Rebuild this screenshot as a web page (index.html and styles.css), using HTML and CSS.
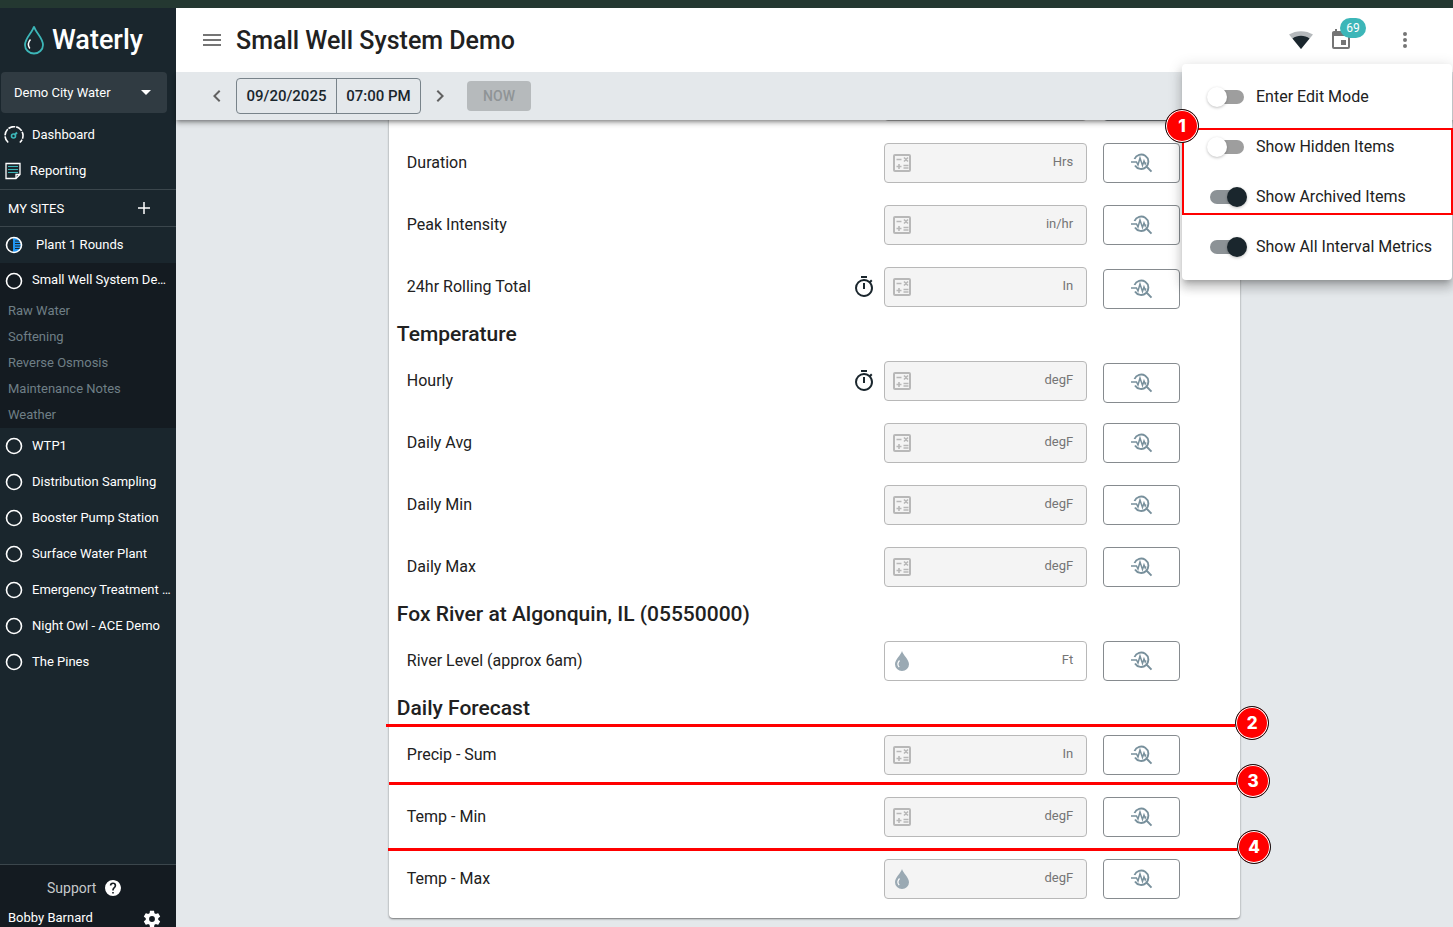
FILE: index.html
```html
<!DOCTYPE html>
<html lang="en">
<head>
    <meta charset="UTF-8">
    <meta name="viewport" content="width=device-width, initial-scale=1.0">
    <title>Waterly - Small Well System Demo</title>
    <link rel="stylesheet" href="styles.css">
</head>
<body>
    <svg class="sprite" aria-hidden="true">
        <symbol id="i-calc" viewBox="0 0 18 18">
            <rect x="1" y="1" width="16" height="16" rx="1" fill="none" stroke="currentColor" stroke-width="2"/>
            <path d="M3.500 5.500h5M3.500 12.500h5M6 10v5M10.500 11.500h5M10.500 14h5M11 3.500l4 4M15 3.500l-4 4" fill="none" stroke="currentColor" stroke-width="1.600"/>
        </symbol>
        <symbol id="i-drop" viewBox="0 0 14 20">
            <path d="M7 0C6 4 0 8.500 0 13.200A7 6.800 0 0 0 14 13.200C14 8.500 8 4 7 0Z" fill="currentColor"/>
            <path d="M4.500 9.500C2.600 11.600 2.500 14.200 4.200 16.200" fill="none" stroke="#fff" stroke-width="1.200"/>
        </symbol>
        <symbol id="i-chart" viewBox="0 0 22 20">
            <path d="M3.500 6A7.200 7.200 0 1 1 4 12.500M15.500 13.500L20.500 18.700" fill="none" stroke="currentColor" stroke-width="1.900"/>
            <path d="M0 9h5.500l1.500 3 2-7 2.500 7.500 1.500-4.500 1.200 3 .8-1.500" fill="none" stroke="currentColor" stroke-width="1.500"/>
        </symbol>
        <symbol id="i-timer" viewBox="0 0 24 24">
            <path fill="currentColor" d="M12,20A7,7 0 0,1 5,13A7,7 0 0,1 12,6A7,7 0 0,1 19,13A7,7 0 0,1 12,20M19.03,7.39L20.45,5.97C20,5.46 19.55,5 19.04,4.56L17.62,6C16.07,4.74 14.12,4 12,4A9,9 0 0,0 3,13A9,9 0 0,0 12,22C17,22 21,17.97 21,13C21,10.88 20.26,8.93 19.03,7.39M11,14H13V8H11M15,1H9V3H15V1Z"/>
        </symbol>
        <symbol id="i-ring" viewBox="0 0 18 18">
            <circle cx="9" cy="9" r="7.500" fill="none" stroke="#fff" stroke-width="1.600"/>
        </symbol>
    </svg>

    <div class="topline"></div>
    <div class="app">
        <nav class="sidebar">
            <a class="logo" href="#">
                <svg width="20" height="30" viewBox="0 0 20 30">
                    <path d="M10 1.500C8.500 7.500 1 13 1 20A9 8.500 0 0 0 19 20C19 13 11.500 7.500 10 1.500Z" fill="none" stroke="#3cb6b8" stroke-width="1.800"/>
                    <path d="M6.500 14.500C3.800 17.500 3.700 20.500 5.800 23.500" fill="none" stroke="#fff" stroke-width="1.500"/>
                </svg>
                <span>Waterly</span>
            </a>
            <div class="org">
                <select aria-label="Organization">
                    <option>Demo City Water</option>
                </select>
                <svg width="10" height="5" viewBox="0 0 10 5"><path d="M0 0h10L5 5z" fill="#fff"/></svg>
            </div>
            <a class="item" href="#">
                <svg width="20" height="18" viewBox="0 0 20 18">
                    <path d="M4.200 16.500A9 9 0 1 1 15.800 16.500" fill="none" stroke="#fff" stroke-width="1.600" stroke-dasharray="7 1"/>
                    <circle cx="9.500" cy="10" r="2" fill="none" stroke="#3cb6b8" stroke-width="1.600"/>
                    <path d="M10.500 9L13 6.500" stroke="#3cb6b8" stroke-width="2"/>
                </svg>
                <span>Dashboard</span>
            </a>
            <a class="item report" href="#">
                <svg width="16" height="18" viewBox="0 0 16 18">
                    <path d="M1 1.500h14v11L11 16.500H1zM15 12.500h-4v4" fill="none" stroke="#fff" stroke-width="1.300"/>
                    <path d="M3 4.500h10M3 7.500h10M3 10.500h10" stroke="#3cb6b8" stroke-width="1.200"/>
                </svg>
                <span>Reporting</span>
            </a>
            <div class="sites">
                <span>MY SITES</span>
                <button aria-label="Add site">
                    <svg width="12" height="12" viewBox="0 0 12 12"><path d="M6 0v12M0 6h12" stroke="#fff" stroke-width="1.500"/></svg>
                </button>
            </div>
            <a class="item rounds" href="#">
                <svg width="18" height="18" viewBox="0 0 18 18">
                    <path d="M8 1.500h1a7.500 7.500 0 0 1 0 15H8z" fill="#2196f3"/>
                    <path d="M10 5h6M10 7.500h6M10 10h6M10 12.500h6" stroke="#1a262d" stroke-width="1"/>
                    <circle cx="9" cy="9" r="7.500" fill="none" stroke="#fff" stroke-width="1.600"/>
                </svg>
                <span>Plant 1 Rounds</span>
            </a>
            <div class="open-site">
                <a class="item" href="#"><svg width="18" height="18"><use href="#i-ring"/></svg><span>Small Well System De…</span></a>
                <a class="sub" href="#">Raw Water</a>
                <a class="sub" href="#">Softening</a>
                <a class="sub" href="#">Reverse Osmosis</a>
                <a class="sub" href="#">Maintenance Notes</a>
                <a class="sub" href="#">Weather</a>
            </div>
            <a class="item" href="#"><svg width="18" height="18"><use href="#i-ring"/></svg><span>WTP1</span></a>
            <a class="item" href="#"><svg width="18" height="18"><use href="#i-ring"/></svg><span>Distribution Sampling</span></a>
            <a class="item" href="#"><svg width="18" height="18"><use href="#i-ring"/></svg><span>Booster Pump Station</span></a>
            <a class="item" href="#"><svg width="18" height="18"><use href="#i-ring"/></svg><span>Surface Water Plant</span></a>
            <a class="item" href="#"><svg width="18" height="18"><use href="#i-ring"/></svg><span>Emergency Treatment …</span></a>
            <a class="item" href="#"><svg width="18" height="18"><use href="#i-ring"/></svg><span>Night Owl - ACE Demo</span></a>
            <a class="item" href="#"><svg width="18" height="18"><use href="#i-ring"/></svg><span>The Pines</span></a>
            <div class="account">
                <a class="support" href="#">
                    <span>Support</span>
                    <svg width="16" height="16" viewBox="2 2 20 20"><path fill="#fff" d="M15.070,11.250L14.170,12.170C13.450,12.890 13,13.500 13,15H11V14.500C11,13.390 11.450,12.390 12.170,11.670L13.410,10.410C13.780,10.050 14,9.550 14,9C14,7.890 13.100,7 12,7A2,2 0 0,0 10,9H8A4,4 0 0,1 12,5A4,4 0 0,1 16,9C16,9.880 15.640,10.670 15.070,11.250M13,19H11V17H13M12,2A10,10 0 0,0 2,12A10,10 0 0,0 12,22A10,10 0 0,0 22,12C22,6.470 17.500,2 12,2Z"/></svg>
                </a>
                <div class="user">
                    <span>Bobby Barnard</span>
                    <button aria-label="Settings">
                        <svg width="20" height="20" viewBox="0 0 24 24"><path fill="#fff" d="M12,15.500A3.500,3.500 0 0,1 8.500,12A3.500,3.500 0 0,1 12,8.500A3.500,3.500 0 0,1 15.500,12A3.500,3.500 0 0,1 12,15.500M19.430,12.970C19.470,12.650 19.500,12.330 19.500,12C19.500,11.670 19.470,11.340 19.430,11L21.540,9.370C21.730,9.220 21.780,8.950 21.660,8.730L19.660,5.270C19.540,5.050 19.270,4.960 19.050,5.050L16.560,6.050C16.040,5.660 15.500,5.320 14.870,5.070L14.500,2.420C14.460,2.180 14.250,2 14,2H10C9.750,2 9.540,2.180 9.500,2.420L9.130,5.070C8.500,5.320 7.960,5.660 7.440,6.050L4.950,5.050C4.730,4.960 4.460,5.050 4.340,5.270L2.340,8.730C2.210,8.950 2.270,9.220 2.460,9.370L4.570,11C4.530,11.340 4.500,11.670 4.500,12C4.500,12.330 4.530,12.650 4.570,12.970L2.460,14.630C2.270,14.780 2.210,15.050 2.340,15.270L4.340,18.730C4.460,18.950 4.730,19.030 4.950,18.950L7.440,17.940C7.960,18.340 8.500,18.680 9.130,18.930L9.500,21.580C9.540,21.820 9.750,22 10,22H14C14.250,22 14.460,21.820 14.500,21.580L14.870,18.930C15.500,18.670 16.040,18.340 16.560,17.940L19.050,18.950C19.270,19.030 19.540,18.950 19.660,18.730L21.660,15.270C21.780,15.050 21.730,14.780 21.540,14.630L19.430,12.970Z"/></svg>
                    </button>
                </div>
            </div>
        </nav>

        <div class="page">
            <header class="header">
                <button class="menu-btn" aria-label="Toggle navigation">
                    <svg width="24" height="24" viewBox="0 0 24 24"><path fill="#757575" d="M3,6H21V8H3V6M3,11H21V13H3V11M3,16H21V18H3V16Z"/></svg>
                </button>
                <h1>Small Well System Demo</h1>
                <div class="tools">
                    <svg class="wifi" width="24" height="18" viewBox="0 0 24 18">
                        <path d="M12 18L0 3.500C7 -1 17 -1 24 3.500z" fill="#b5b9bc"/>
                        <path d="M12 18L3.500 7.500C8 3.800 16 3.800 20.500 7.500z" fill="#1a262d"/>
                    </svg>
                    <button class="calendar" aria-label="Calendar">
                        <svg width="24" height="24" viewBox="0 0 24 24"><path fill="#757575" d="M19,19H5V8H19M16,1V3H8V1H6V3H5C3.890,3 3,3.890 3,5V19A2,2 0 0,0 5,21H19A2,2 0 0,0 21,19V5C21,3.890 20.100,3 19,3H18V1M17,12H12V17H17V12Z"/></svg>
                        <span class="count">69</span>
                    </button>
                    <button aria-label="More options">
                        <svg width="24" height="24" viewBox="0 0 24 24"><path fill="#757575" d="M12,16A2,2 0 0,1 14,18A2,2 0 0,1 12,20A2,2 0 0,1 10,18A2,2 0 0,1 12,16M12,10A2,2 0 0,1 14,12A2,2 0 0,1 12,14A2,2 0 0,1 10,12A2,2 0 0,1 12,10M12,4A2,2 0 0,1 14,6A2,2 0 0,1 12,8A2,2 0 0,1 10,6A2,2 0 0,1 12,4Z"/></svg>
                    </button>
                </div>
                <div class="options">
                    <label class="option"><input type="checkbox"><span>Enter Edit Mode</span></label>
                    <label class="option"><input type="checkbox"><span>Show Hidden Items</span></label>
                    <label class="option"><input type="checkbox" checked><span>Show Archived Items</span></label>
                    <label class="option"><input type="checkbox" checked><span>Show All Interval Metrics</span></label>
                    <div class="frame"></div>
                    <span class="marker marker-1">1</span>
                </div>
            </header>
            <div class="datebar">
                <button aria-label="Previous"><svg width="24" height="24" viewBox="0 0 24 24"><path fill="#616161" d="M15.410,16.580L10.830,12L15.410,7.410L14,6L8,12L14,18L15.410,16.580Z"/></svg></button>
                <div class="picker">
                    <button>09/20/2025</button>
                    <button>07:00 PM</button>
                </div>
                <button aria-label="Next"><svg width="24" height="24" viewBox="0 0 24 24"><path fill="#616161" d="M8.590,16.580L13.170,12L8.590,7.410L10,6L16,12L10,18L8.590,16.580Z"/></svg></button>
                <button class="now" disabled>NOW</button>
            </div>

            <main class="content">
                <form class="card">
                    <!-- scrolled under the date bar -->
                    <div class="row">
                        <div class="label"></div>
                        <div class="field off"><input aria-label="Value" disabled></div>
                        <button type="button" class="chart" aria-label="Trend"></button>
                    </div>
                    <div class="row">
                        <label class="label" for="duration">Duration</label>
                        <div class="field off"><svg class="calc"><use href="#i-calc"/></svg><input id="duration" disabled><span>Hrs</span></div>
                        <button type="button" class="chart" aria-label="Duration trend"><svg><use href="#i-chart"/></svg></button>
                    </div>
                    <div class="row">
                        <label class="label" for="peak">Peak Intensity</label>
                        <div class="field off"><svg class="calc"><use href="#i-calc"/></svg><input id="peak" disabled><span>in/hr</span></div>
                        <button type="button" class="chart" aria-label="Peak intensity trend"><svg><use href="#i-chart"/></svg></button>
                    </div>
                    <div class="row timed">
                        <label class="label" for="rolling">24hr Rolling Total</label>
                        <svg class="timer"><use href="#i-timer"/></svg>
                        <div class="field off"><svg class="calc"><use href="#i-calc"/></svg><input id="rolling" disabled><span>In</span></div>
                        <button type="button" class="chart" aria-label="Rolling total trend"><svg><use href="#i-chart"/></svg></button>
                    </div>
                    <h2>Temperature</h2>
                    <div class="row timed">
                        <label class="label" for="hourly">Hourly</label>
                        <svg class="timer"><use href="#i-timer"/></svg>
                        <div class="field off"><svg class="calc"><use href="#i-calc"/></svg><input id="hourly" disabled><span>degF</span></div>
                        <button type="button" class="chart" aria-label="Hourly trend"><svg><use href="#i-chart"/></svg></button>
                    </div>
                    <div class="row">
                        <label class="label" for="avg">Daily Avg</label>
                        <div class="field off"><svg class="calc"><use href="#i-calc"/></svg><input id="avg" disabled><span>degF</span></div>
                        <button type="button" class="chart" aria-label="Daily average trend"><svg><use href="#i-chart"/></svg></button>
                    </div>
                    <div class="row">
                        <label class="label" for="min">Daily Min</label>
                        <div class="field off"><svg class="calc"><use href="#i-calc"/></svg><input id="min" disabled><span>degF</span></div>
                        <button type="button" class="chart" aria-label="Daily min trend"><svg><use href="#i-chart"/></svg></button>
                    </div>
                    <div class="row">
                        <label class="label" for="max">Daily Max</label>
                        <div class="field off"><svg class="calc"><use href="#i-calc"/></svg><input id="max" disabled><span>degF</span></div>
                        <button type="button" class="chart" aria-label="Daily max trend"><svg><use href="#i-chart"/></svg></button>
                    </div>
                    <h2>Fox River at Algonquin, IL (05550000)</h2>
                    <div class="row">
                        <label class="label" for="river">River Level (approx 6am)</label>
                        <div class="field"><svg class="drop"><use href="#i-drop"/></svg><input id="river"><span>Ft</span></div>
                        <button type="button" class="chart" aria-label="River level trend"><svg><use href="#i-chart"/></svg></button>
                    </div>
                    <h2>Daily Forecast</h2>
                    <div class="row">
                        <label class="label" for="precip">Precip - Sum</label>
                        <div class="field off"><svg class="calc"><use href="#i-calc"/></svg><input id="precip" disabled><span>In</span></div>
                        <button type="button" class="chart" aria-label="Precipitation trend"><svg><use href="#i-chart"/></svg></button>
                        <div class="callout callout-2"><span class="marker">2</span></div>
                    </div>
                    <div class="row">
                        <label class="label" for="tmin">Temp - Min</label>
                        <div class="field off"><svg class="calc"><use href="#i-calc"/></svg><input id="tmin" disabled><span>degF</span></div>
                        <button type="button" class="chart" aria-label="Minimum forecast trend"><svg><use href="#i-chart"/></svg></button>
                        <div class="callout callout-3"><span class="marker">3</span></div>
                    </div>
                    <div class="row">
                        <label class="label" for="tmax">Temp - Max</label>
                        <div class="field off"><svg class="drop"><use href="#i-drop"/></svg><input id="tmax" disabled><span>degF</span></div>
                        <button type="button" class="chart" aria-label="Maximum forecast trend"><svg><use href="#i-chart"/></svg></button>
                        <div class="callout callout-4"><span class="marker">4</span></div>
                    </div>
                </form>
            </main>
        </div>
    </div>
</body>
</html>
```
FILE: styles.css
```css
*{
    box-sizing: border-box;
    margin: 0;
    padding: 0;
}
body{
    height: 100vh;
    display: flex;
    flex-direction: column;
    overflow: hidden;
    background: #e4e8eb;
    color: #212121;
    font-family: Roboto, sans-serif;
    font-size: 16px;
}
a{
    color: inherit;
    text-decoration: none;
}
button, input, select{
    font: inherit;
    color: inherit;
    background: none;
    border: none;
    outline: none;
}
button{
    display: flex;
    align-items: center;
    justify-content: center;
}
svg{
    flex-shrink: 0;
}
.sprite{
    display: none;
}
.topline{
    flex: none;
    height: 8px;
    background: #243831;
}
.app{
    flex: 1;
    min-height: 0;
    display: flex;
}

/* sidebar */
.sidebar{
    flex: none;
    width: 176px;
    display: flex;
    flex-direction: column;
    background: #1a262d;
    color: #fff;
    font-size: 13px;
}
.logo{
    height: 64px;
    display: flex;
    align-items: center;
    gap: 8px;
    padding-left: 24px;
    font-size: 27px;
    font-weight: 500;
}
.org{
    flex: none;
    height: 41px;
    margin: 0 9px 4px 1px;
    display: flex;
    align-items: center;
    padding: 0 16px 0 13px;
    background: #303b42;
    border-radius: 4px;
}
.org select{
    flex: 1;
    appearance: none;
}
.item{
    flex: none;
    height: 36px;
    display: flex;
    align-items: center;
    gap: 9px;
    padding: 0 4px 0 5px;
    white-space: nowrap;
}
.item span{
    padding-bottom: 2px;
}
.org + .item{
    padding-left: 4px;
    gap: 8px;
}
.sites{
    flex: none;
    height: 38px;
    display: flex;
    align-items: center;
    justify-content: space-between;
    padding: 0 26px 0 8px;
    border-top: 1px solid #3b464c;
    border-bottom: 1px solid #3b464c;
}
.rounds{
    gap: 13px;
}
.open-site{
    flex: none;
    background: #141b21;
}
.open-site .item{
    height: 35px;
}
.sub{
    display: block;
    padding-left: 8px;
    line-height: 26px;
    color: #6f7f86;
}
.account{
    margin-top: auto;
    height: 63px;
    border-top: 1px solid #3b464c;
    background: #141b21;
}
.support{
    height: 44px;
    display: flex;
    align-items: center;
    gap: 9px;
    padding: 2px 0 0 47px;
    color: #c5c9cb;
    font-size: 14px;
}
.user{
    display: flex;
    justify-content: space-between;
    line-height: 18px;
    padding: 0 14px 0 8px;
}

/* header */
.page{
    flex: 1;
    min-width: 0;
    display: flex;
    flex-direction: column;
}
.header{
    position: relative;
    z-index: 3;
    flex: none;
    height: 64px;
    display: flex;
    align-items: center;
    padding: 0 36px 0 24px;
    background: #fff;
}
.header h1{
    margin-left: 12px;
    font-size: 25px;
    font-weight: 500;
}
.tools{
    margin-left: auto;
    display: flex;
    align-items: center;
    gap: 16px;
}
.calendar{
    position: relative;
    margin-right: 24px;
}
.count{
    position: absolute;
    left: 11px;
    top: -10px;
    width: 26px;
    height: 20px;
    border-radius: 10px;
    background: #3cb6b8;
    color: #fff;
    font-size: 12px;
    line-height: 20px;
    text-align: center;
}
.options{
    position: absolute;
    top: 56px;
    right: 1px;
    width: 270px;
    padding: 8px 0;
    background: #fff;
    border-radius: 4px;
    box-shadow: 0 5px 5px -3px rgba(0,0,0,.2), 0 8px 10px 1px rgba(0,0,0,.14), 0 3px 14px 2px rgba(0,0,0,.12);
}
.option{
    height: 50px;
    display: flex;
    align-items: center;
    gap: 9px;
    padding-left: 25px;
    white-space: nowrap;
}
.option span{
    padding-bottom: 2px;
}
.option input{
    appearance: none;
    position: relative;
    width: 40px;
    height: 20px;
}
.option input::before{
    content: "";
    position: absolute;
    left: 3px;
    top: 3px;
    width: 34px;
    height: 14px;
    border-radius: 7px;
    background: #9e9e9e;
}
.option input::after{
    content: "";
    position: absolute;
    left: 0;
    top: 0;
    width: 20px;
    height: 20px;
    border-radius: 50%;
    background: #fff;
    box-shadow: 0 1px 3px rgba(0,0,0,.25);
}
.option input:checked::before{
    background: #8c9296;
}
.option input:checked::after{
    left: 20px;
    background: #1a262d;
}

/* date bar */
.datebar{
    position: relative;
    z-index: 2;
    flex: none;
    height: 48px;
    display: flex;
    align-items: center;
    padding-left: 29px;
    background: #e4e8eb;
    box-shadow: 0 2px 4px -1px rgba(0,0,0,.4), 0 4px 5px rgba(0,0,0,.18);
}
.picker{
    height: 36px;
    display: flex;
    margin: 0 7px;
    border: 1px solid #78838a;
    border-radius: 4px;
    color: #1a262d;
    font-size: 15px;
    font-weight: 500;
}
.picker button{
    width: 99px;
    font-weight: 500;
}
.picker button + button{
    width: 84px;
    border-left: 1px solid #78838a;
}
.now{
    width: 64px;
    height: 30px;
    margin-left: 15px;
    border-radius: 4px;
    background: #b6babc;
    color: #8f9496;
    font-size: 14px;
    font-weight: 500;
}

/* readings */
.content{
    flex: 1;
    min-height: 0;
    display: flex;
    flex-direction: column;
    justify-content: flex-end;
    align-items: center;
    padding-bottom: 9px;
    overflow: hidden;
}
.card{
    flex: none;
    width: calc(100% * 2 / 3);
    padding-bottom: 8px;
    background: #fff;
    border-radius: 4px;
    box-shadow: 0 1px 2px rgba(0,0,0,.5);
}
.card h2{
    padding-left: 8px;
    font-size: 21px;
    line-height: 32px;
    font-weight: 500;
}
.row{
    position: relative;
    height: 62px;
    display: flex;
    align-items: center;
    padding: 0 60px 0 18px;
}
.label{
    flex: 1;
    padding-bottom: 2px;
}
.timer{
    width: 24px;
    height: 24px;
    margin-right: 8px;
    color: #1a262d;
}
.field{
    width: 203px;
    height: 40px;
    display: flex;
    align-items: center;
    padding: 0 13px 0 8px;
    border: 1px solid #b8b8b8;
    border-radius: 4px;
    color: #757575;
    font-size: 13px;
}
.field.off{
    background: #f4f4f4;
}
.field input{
    flex: 1;
    min-width: 0;
}
.field span{
    padding-bottom: 3px;
}
.calc{
    width: 18px;
    height: 18px;
    color: #b8b8b8;
}
.drop{
    width: 18px;
    height: 20px;
    color: #9aa9b3;
}
.chart{
    width: 77px;
    height: 40px;
    margin-left: 16px;
    border: 1px solid #868b8f;
    border-radius: 4px;
    color: #78909c;
}
.chart svg{
    width: 22px;
    height: 20px;
}
.timed .chart{
    margin-top: 4px;
}

/* numbered marks */
.marker{
    width: 34px;
    height: 34px;
    border: 1px solid #111;
    border-radius: 50%;
    background: #f00;
    box-shadow: inset 0 0 0 1px #fff;
    color: #fff;
    font-family: Inter, sans-serif;
    font-size: 17px;
    font-weight: 800;
    line-height: 32px;
    text-align: center;
}
.frame{
    position: absolute;
    top: 64px;
    left: 0;
    right: -1px;
    height: 87px;
    border: 2px solid #f00;
}
.marker-1{
    position: absolute;
    left: -17px;
    top: 45px;
}
.callout{
    position: absolute;
    left: 0;
    right: -30px;
    display: flex;
    pointer-events: none;
}
.callout::before{
    content: "";
    flex: 1;
    height: 3px;
    margin-top: 18px;
    background: #f00;
}
.callout-2{
    top: -18px;
    left: -3px;
    right: -29px;
}
.callout-3{
    top: -22px;
}
.callout-4{
    top: -18px;
    left: -1px;
    right: -31px;
}
```
